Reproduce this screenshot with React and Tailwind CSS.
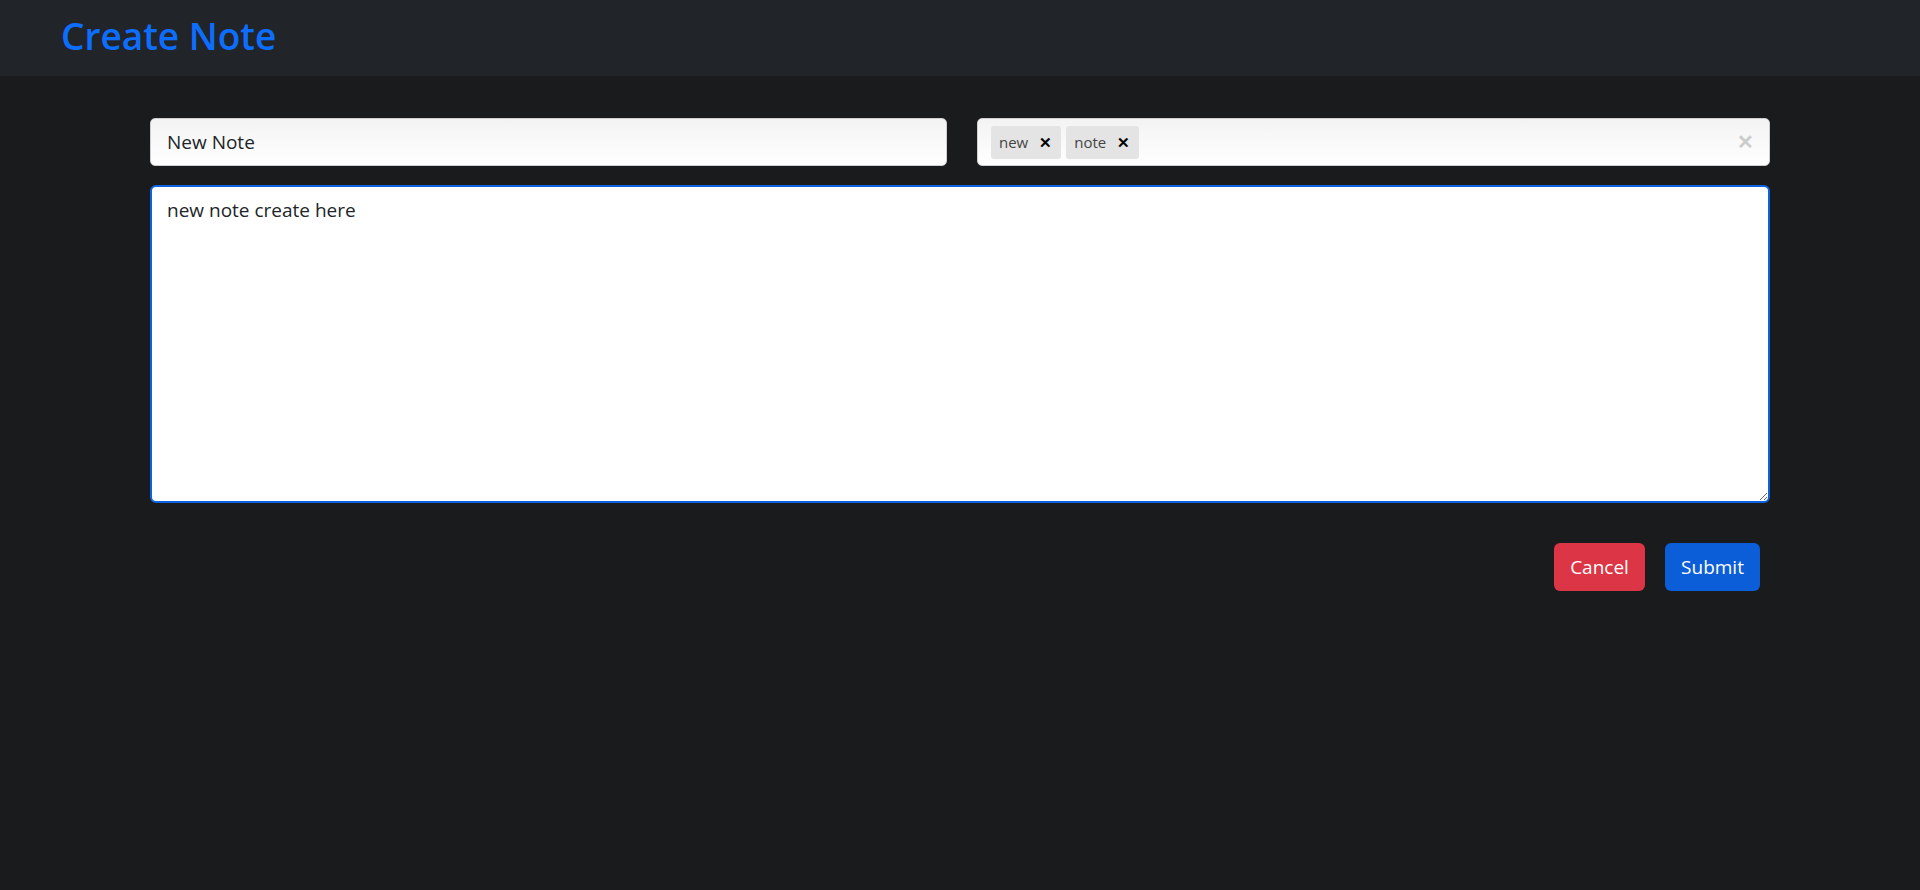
import React from "react";

export default function App() {
  return (
    <div className="min-h-[890px] w-full bg-[#1a1b1d]" style={{ fontFamily: '"Open Sans", "Noto Sans", sans-serif' }}>
      <header className="flex h-[76px] items-center bg-[#212529] pl-[61px]">
        <h1 className="mt-[-4px] text-[37px] font-semibold leading-[48px] text-[#0d6efd]">Create Note</h1>
      </header>
      <main className="pl-[150px] pr-[150px] pt-[42px]">
        <div className="flex gap-[30px]">
          <div className="flex h-[48px] flex-1 items-center rounded-[5px] border border-[#cfcfcf] bg-gradient-to-b from-[#f3f3f3] to-white px-[16px] text-[19px] text-[#212529]">
            New Note
          </div>
          <div className="flex h-[48px] flex-1 items-center rounded-[5px] border border-[#cfcfcf] bg-gradient-to-b from-[#f3f3f3] to-white pl-[13px] pr-[15px]">
            <div className="flex flex-1 items-center gap-[5px]">
              <span className="flex h-[33px] items-center gap-[11px] rounded-[3px] bg-[#e4e4e4] pl-[8px] pr-[9px] text-[15px] text-[#444]">
                new <span className="text-[15px] font-bold text-black">✕</span>
              </span>
              <span className="flex h-[33px] items-center gap-[11px] rounded-[3px] bg-[#e4e4e4] pl-[8px] pr-[9px] text-[15px] text-[#444]">
                note <span className="text-[15px] font-bold text-black">✕</span>
              </span>
            </div>
            <span className="text-[20px] font-bold leading-none text-[#cccccc]">✕</span>
          </div>
        </div>
        <textarea
          defaultValue="new note create here"
          className="mt-[19px] block h-[318px] w-full rounded-[6px] border-2 border-[#0d64e0] bg-white px-[15px] py-[8px] text-[19px] leading-[30px] text-[#212529] outline-none"
        />
        <div className="mt-[40px] flex justify-end gap-[20px] pr-[10px]">
          <button className="h-[48px] w-[91px] rounded-[6px] bg-[#dc3545] text-[19px] text-white">Cancel</button>
          <button className="h-[48px] w-[95px] rounded-[6px] bg-[#0b5ed7] text-[19px] text-white">Submit</button>
        </div>
      </main>
    </div>
  );
}
